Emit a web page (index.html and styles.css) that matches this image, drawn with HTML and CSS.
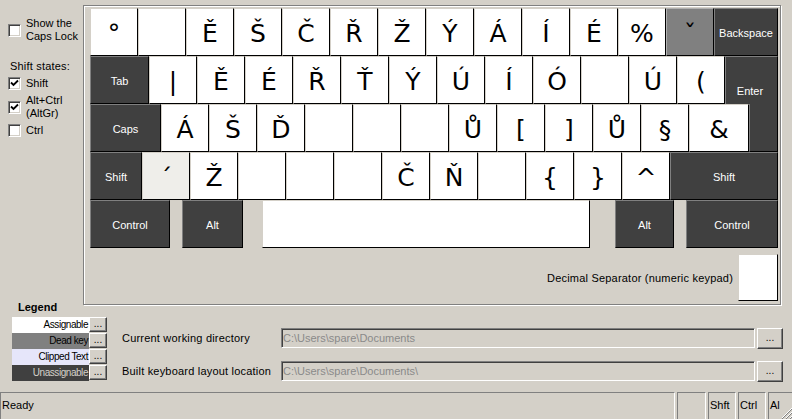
FILE: index.html
```html
<!DOCTYPE html>
<html>
<head>
<meta charset="utf-8">
<title>Keyboard Layout Creator</title>
<link rel="stylesheet" href="styles.css">
</head>
<body>
<div class="app">
  <div class="top">
    <aside class="side">
      <label class="chk chk-caps"><span class="box"></span><span class="lbl">Show the<br>Caps Lock</span></label>
      <div class="group-title">Shift states:</div>
      <label class="chk chk-gap"><span class="box"><svg class="tick" viewBox="0 0 9 9" width="9" height="9"><path d="M1 3.5 L3.5 6 L8 1.5" /></svg></span><span class="lbl">Shift</span></label>
      <label class="chk chk-gap"><span class="box"><svg class="tick" viewBox="0 0 9 9" width="9" height="9"><path d="M1 3.5 L3.5 6 L8 1.5" /></svg></span><span class="lbl">Alt+Ctrl<br>(AltGr)</span></label>
      <label class="chk chk-gap"><span class="box"></span><span class="lbl">Ctrl</span></label>
    </aside>

    <div class="frame">
      <div class="row">
        <div class="k">°</div><div class="k"></div><div class="k">Ě</div><div class="k">Š</div><div class="k">Č</div><div class="k">Ř</div><div class="k">Ž</div><div class="k">Ý</div><div class="k">Á</div><div class="k">Í</div><div class="k">É</div><div class="k">%</div><div class="k dead">ˇ</div><div class="k fn w-bksp">Backspace</div>
      </div>
      <div class="row">
        <div class="k fn w-tab">Tab</div><div class="k">|</div><div class="k">Ě</div><div class="k">É</div><div class="k">Ř</div><div class="k">Ť</div><div class="k">Ý</div><div class="k">Ú</div><div class="k">Í</div><div class="k">Ó</div><div class="k"></div><div class="k">Ú</div><div class="k">(</div><div class="k fn enter-top">Enter</div>
      </div>
      <div class="row">
        <div class="k fn w-caps">Caps</div><div class="k">Á</div><div class="k">Š</div><div class="k">Ď</div><div class="k"></div><div class="k"></div><div class="k"></div><div class="k">Ů</div><div class="k">[</div><div class="k">]</div><div class="k">Ů</div><div class="k">§</div><div class="k w-amp">&amp;</div><div class="k fn enter-bot"></div>
      </div>
      <div class="row">
        <div class="k fn w-lshift">Shift</div><div class="k clipped">´</div><div class="k">Ž</div><div class="k"></div><div class="k"></div><div class="k"></div><div class="k">Č</div><div class="k">Ň</div><div class="k"></div><div class="k">{</div><div class="k">}</div><div class="k">^</div><div class="k fn w-rshift">Shift</div>
      </div>
      <div class="row">
        <div class="k fn w-lctl">Control</div><div class="k fn w-lalt">Alt</div><div class="k w-space"></div><div class="k fn w-ralt">Alt</div><div class="k fn w-rctl">Control</div>
      </div>
      <div class="dec">
        <span class="dec-label">Decimal Separator (numeric keypad)</span>
        <div class="k dec-key"></div>
      </div>
    </div>
  </div>

  <div class="bottom">
    <div class="legend">
      <div class="legend-title">Legend</div>
      <div class="legend-rows">
        <div class="lrow"><span class="sw sw-assign">Assignable</span><span class="dots">...</span></div>
        <div class="lrow"><span class="sw sw-dead">Dead key</span><span class="dots">...</span></div>
        <div class="lrow"><span class="sw sw-clip">Clipped Text</span><span class="dots">...</span></div>
        <div class="lrow"><span class="sw sw-un">Unassignable</span><span class="dots">...</span></div>
      </div>
    </div>
    <div class="paths">
      <div class="path-row">
        <span class="path-label">Current working directory</span>
        <span class="field">C:\Users\spare\Documents</span>
        <span class="browse">...</span>
      </div>
      <div class="path-row">
        <span class="path-label">Built keyboard layout location</span>
        <span class="field">C:\Users\spare\Documents\</span>
        <span class="browse">...</span>
      </div>
    </div>
  </div>

  <div class="status">
    <div class="sp sp-main">Ready</div>
    <div class="sp sp-a"></div>
    <div class="sp sp-b">Shft</div>
    <div class="sp sp-b">Ctrl</div>
    <div class="sp sp-c">Al<svg class="grip" viewBox="0 0 12 12" width="12" height="12"><path d="M11 1 L1 11 M11 5 L5 11 M11 9 L9 11" stroke="#fff"/><path d="M12 1 L1 12 M12 5 L5 12 M12 9 L9 12" stroke="#808080"/></svg></div>
  </div>
</div>
</body>
</html>
```

FILE: styles.css
```css
html, body {
  margin: 0;
  padding: 0;
}
body {
  background: #d4d0c8;
  font: 11px "Liberation Sans", Arial, sans-serif;
  color: #000;
}
.app {
  width: 792px;
  height: 419px;
  display: flex;
  flex-direction: column;
  overflow: hidden;
}

/* ---------- top area ---------- */
.top {
  display: flex;
  height: 306px;
  padding-top: 5px;
  box-sizing: border-box;
  flex: none;
}
.side {
  width: 83px;
  flex: none;
  box-sizing: border-box;
  padding: 12px 0 0 8px;
  display: flex;
  flex-direction: column;
}
.chk {
  display: flex;
  align-items: center;
  gap: 5px;
  line-height: 13px;
}
.chk-gap {
  margin-top: 4px;
}
.group-title {
  margin-top: 17px;
  margin-left: 2px;
  line-height: 13px;
  letter-spacing: 0.2px;
}
.box {
  width: 13px;
  height: 13px;
  flex: none;
  box-sizing: border-box;
  background: #fff;
  border: 1px solid;
  border-color: #808080 #fff #fff #808080;
  box-shadow: inset 1px 1px 0 #404040, inset -1px -1px 0 #d4d0c8;
  padding: 1px;
  display: flex;
}
.tick path {
  fill: none;
  stroke: #000;
  stroke-width: 1.8;
}

/* ---------- keyboard ---------- */
.frame {
  width: 698px;
  height: 300px;
  box-sizing: border-box;
  border: 1px solid #808080;
  box-shadow: 1px 1px 0 #fff, inset 1px 1px 0 #fff;
  padding: 2px 0 0 6px;
  flex: none;
}
.row {
  display: flex;
  height: 48px;
}
.k {
  width: 48px;
  height: 48px;
  flex: none;
  box-sizing: border-box;
  background: #fff;
  border: 1px solid;
  border-color: #d4d0c8 #000 #000 #d4d0c8;
  display: flex;
  align-items: center;
  justify-content: center;
  padding-top: 3px;
  font: 25px/1 "DejaVu Sans", sans-serif;
  color: #000;
}
.k.fn {
  background: #404040;
  color: #fff;
  border-color: #808080 #000 #000 #808080;
  font: 11px/1 "Liberation Sans", Arial, sans-serif;
  padding-top: 2px;
}
.k.dead {
  background: #808080;
  border-color: #b0b0b0 #000 #000 #b0b0b0;
}
.k.clipped {
  background: #efeeea;
}
.w-bksp { width: 64px; }
.w-tab { width: 59px; }
.enter-top {
  width: 53px;
  border-bottom: none;
  align-items: flex-end;
  padding-bottom: 7px;
  padding-right: 3px;
}
.enter-bot {
  width: 29px;
  border-top: none;
}
.w-caps { width: 71px; }
.w-amp { width: 60px; }
.w-lshift { width: 52px; }
.w-rshift { width: 108px; }
.w-lctl { width: 80px; }
.w-lalt { width: 61px; margin-left: 12px; }
.w-space { width: 328px; margin-left: 19px; }
.w-ralt { width: 59px; margin-left: 25px; }
.w-rctl { width: 92px; margin-left: 12px; }

.dec {
  display: flex;
  justify-content: flex-end;
  align-items: center;
  gap: 5px;
  width: 688px;
  margin-top: 6px;
}
.dec-label {
  font-size: 11px;
  letter-spacing: 0.2px;
  padding-top: 1px;
}
.k.dec-key {
  width: 40px;
  height: 47px;
}

/* ---------- bottom area ---------- */
.bottom {
  display: flex;
  height: 86px;
  flex: none;
}
.legend {
  margin-left: 12px;
  width: 95px;
  flex: none;
}
.legend-title {
  font-weight: bold;
  line-height: 13px;
  margin-top: -5px;
  padding-left: 6px;
}
.legend-rows {
  margin-top: 3px;
  display: flex;
  flex-direction: column;
}
.lrow {
  display: flex;
  height: 16px;
}
.sw {
  width: 77px;
  box-sizing: border-box;
  text-align: right;
  font-size: 10px;
  letter-spacing: -0.45px;
  line-height: 16px;
  padding-right: 1px;
}
.sw-assign { background: #fff; }
.sw-dead { background: #808080; }
.sw-clip { background: #e6e6fa; }
.sw-un { background: #404040; color: #d4d0c8; }
.dots {
  width: 18px;
  height: 15px;
  box-sizing: border-box;
  background: #d4d0c8;
  border: 1px solid;
  border-color: #fff #404040 #404040 #fff;
  box-shadow: inset -1px -1px 0 #808080;
  font-size: 10px;
  line-height: 11px;
  text-align: center;
}

.paths {
  flex: 1;
  margin-left: 15px;
  margin-right: 9px;
  padding-top: 22px;
  display: flex;
  flex-direction: column;
  gap: 13px;
}
.path-row {
  display: flex;
  align-items: center;
  height: 20px;
}
.path-label {
  width: 159px;
  flex: none;
  letter-spacing: 0.2px;
}
.field {
  flex: 1;
  height: 20px;
  box-sizing: border-box;
  border: 1px solid;
  border-color: #808080 #fff #fff #808080;
  box-shadow: inset 1px 1px 0 #404040;
  color: #8a8a8a;
  padding: 0 0 0 1px;
  line-height: 19px;
}
.browse {
  width: 26px;
  height: 21px;
  margin-left: 2px;
  flex: none;
  box-sizing: border-box;
  background: #d4d0c8;
  border: 1px solid;
  border-color: #fff #404040 #404040 #fff;
  box-shadow: inset -1px -1px 0 #808080;
  font-size: 10px;
  line-height: 17px;
  text-align: center;
}

/* ---------- status bar ---------- */
.status {
  display: flex;
  gap: 2px;
  height: 27px;
  flex: none;
}
.sp {
  box-sizing: border-box;
  height: 27px;
  border: 1px solid;
  border-color: #808080 #fff #fff #808080;
  border-bottom: none;
  line-height: 25px;
  padding-left: 1px;
  flex: none;
  position: relative;
}
.sp-main { width: 675px; }
.sp-a { width: 29px; }
.sp-b { width: 28px; }
.sp-c { width: 25px; border-right: none; }
.grip {
  position: absolute;
  right: 0;
  bottom: 0;
}
```
